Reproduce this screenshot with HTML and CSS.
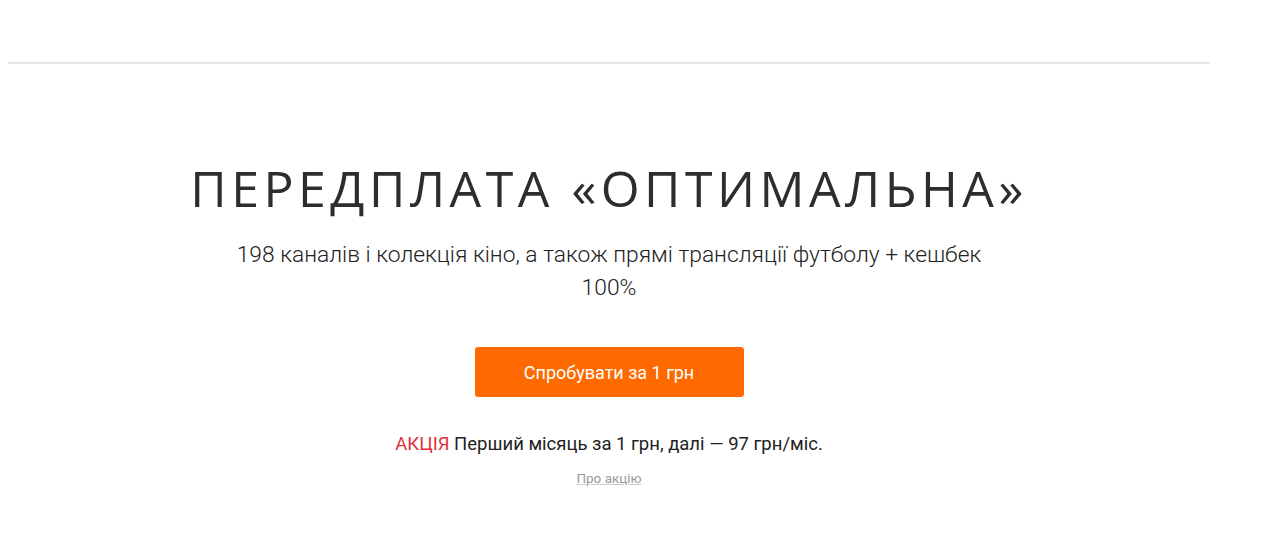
FILE: index.html
```html
<!DOCTYPE html>
<html lang="uk">
<head>
<meta charset="utf-8">
<title>Передплата «Оптимальна»</title>
<link rel="stylesheet" href="styles.css">
</head>
<body>
<div class="page">
  <header class="topbar"></header>
  <section class="hero">
    <h1 class="hero-title">ПЕРЕДПЛАТА «ОПТИМАЛЬНА»</h1>
    <p class="hero-sub">198 каналів і колекція кіно, а також прямі трансляції футболу + кешбек 100%</p>
    <a class="hero-btn" href="#">Спробувати за 1 грн</a>
    <p class="promo"><span class="promo-tag">АКЦІЯ</span> Перший місяць за 1 грн, далі — 97 грн/міс.</p>
    <a class="promo-link" href="#">Про акцію</a>
  </section>
</div>
</body>
</html>
```
FILE: styles.css
```css
html, body {
  margin: 0;
  padding: 0;
  background: #fff;
}
.page {
  width: 1202px;
  margin-left: 8px;
  font-family: Roboto, "Liberation Sans", sans-serif;
  color: #333;
}
.topbar {
  height: 62px;
  border-bottom: 2px solid #e6e6e6;
}
.hero {
  display: flex;
  flex-direction: column;
  align-items: center;
  text-align: center;
  padding-top: 94px;
}
.hero-title {
  margin: 0;
  font-family: "Open Sans", sans-serif;
  font-weight: 400;
  font-size: 50px;
  line-height: 60px;
  letter-spacing: 4.5px;
  color: #2d2d2d;
}
.hero-sub {
  margin: 20px 0 0;
  width: 770px;
  font-family: Roboto, sans-serif;
  font-weight: 300;
  font-size: 22.8px;
  line-height: 33px;
  color: #222;
}
.hero-btn {
  margin-top: 43px;
  width: 269px;
  height: 50px;
  display: flex;
  align-items: center;
  justify-content: center;
  background: #ff6a00;
  border-radius: 3px;
  color: #fff;
  text-decoration: none;
  font-size: 18px;
}
.promo {
  margin: 35px 0 0;
  font-size: 18.5px;
  line-height: 24px;
  color: #222;
}
.promo-tag {
  color: #e0303a;
}
.promo-link {
  margin-top: 14px;
  font-size: 13.5px;
  line-height: 16px;
  color: #999;
  text-decoration: underline;
  text-decoration-color: #ccc;
}
```
